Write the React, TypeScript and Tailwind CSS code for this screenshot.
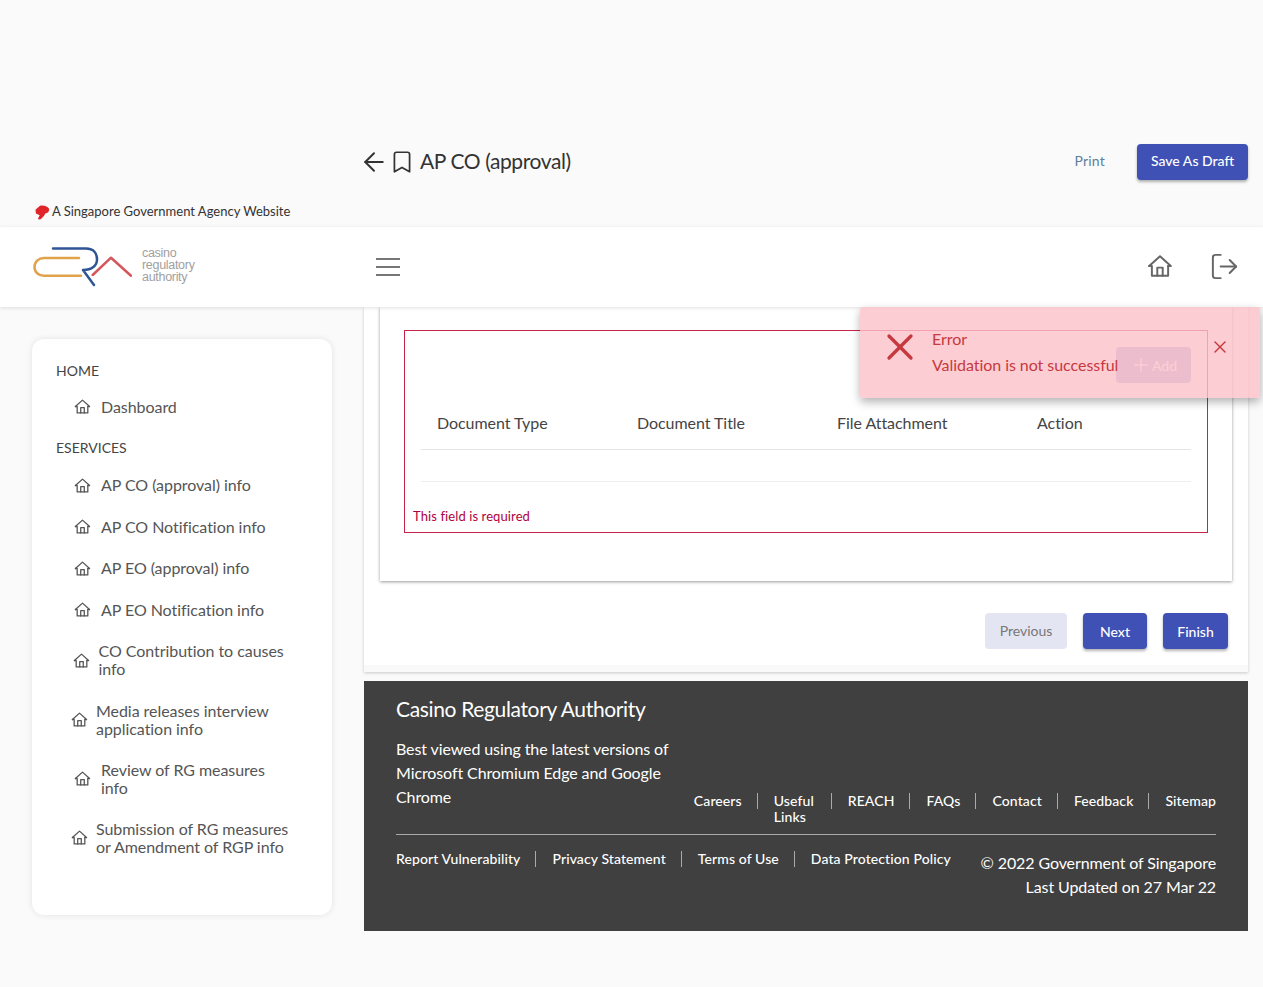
// App.tsx
import { ArrowLeft, Bookmark, LogOut, Plus, X } from "lucide-react";

const font = { fontFamily: "Lato, 'Noto Sans', sans-serif" };

function HomeIcon({ className }: { className?: string }) {
  return (
    <svg viewBox="0 0 24 24" fill="none" stroke="currentColor" strokeWidth="1.8" strokeLinecap="round" strokeLinejoin="round" className={className}>
      <path d="M2 12 12 3l10 9h-2.5" />
      <path d="M2 12h2.5v9h15v-9" />
      <path d="M9.5 21v-7.5h5V21" />
    </svg>
  );
}

function CraLogo() {
  return (
    <svg viewBox="0 0 100 40" fill="none" strokeWidth="2.5" strokeLinecap="round" strokeLinejoin="round" className="h-[40px] w-[100px]">
      <path d="M47 11H12C6.500 11 2.500 15 2.500 20S6.500 28.800 12 28.800h37" stroke="#e0a24a" />
      <path d="M21 1.500h33c8 0 11 5 11 11s-5 10.500-14 10.500l11 15" stroke="#2f5597" />
      <path d="M60.700 28 79 10.700 99 28.700" stroke="#d5575d" />
    </svg>
  );
}

function NavItem({ label, pad, gap }: { label: string[]; pad: string; gap: string }) {
  return (
    <div className={`flex items-center text-[16px] leading-[18px] tracking-[-0.05px] text-[#555] ${label.length > 1 ? "py-[11.6px]" : "py-[11.8px]"} ${pad} ${gap}`}>
      <HomeIcon className="h-[17px] w-[17px] shrink-0" />
      <span>
        {label.map((l) => (
          <span key={l} className="block whitespace-nowrap">{l}</span>
        ))}
      </span>
    </div>
  );
}

function Sidebar() {
  return (
    <aside className="ml-[32px] mt-[32px] h-[576px] w-[300px] shrink-0 rounded-[12px] bg-white pt-[23px] shadow-[0_0_6px_rgba(0,0,0,0.1)]">
      <div className="pl-[24px] text-[14px] leading-[18px] text-[#444]">HOME</div>
      <div className="mt-[6px]">
        <NavItem label={["Dashboard"]} pad="pl-[42px]" gap="gap-[10px]" />
      </div>
      <div className="mt-[8px] pl-[24px] pt-[3px] text-[14px] leading-[18px] text-[#444]">ESERVICES</div>
      <div className="mt-[7.8px]">
        <NavItem label={["AP CO (approval) info"]} pad="pl-[42px]" gap="gap-[10px]" />
        <NavItem label={["AP CO Notification info"]} pad="pl-[42px]" gap="gap-[10px]" />
        <NavItem label={["AP EO (approval) info"]} pad="pl-[42px]" gap="gap-[10px]" />
        <NavItem label={["AP EO Notification info"]} pad="pl-[42px]" gap="gap-[10px]" />
        <NavItem label={["CO Contribution to causes", "info"]} pad="pl-[41px]" gap="gap-[8.500px]" />
        <NavItem label={["Media releases interview", "application info"]} pad="pl-[39px]" gap="gap-[8px]" />
        <NavItem label={["Review of RG measures", "info"]} pad="pl-[42px]" gap="gap-[10px]" />
        <NavItem label={["Submission of RG measures", "or Amendment of RGP info"]} pad="pl-[39px]" gap="gap-[8px]" />
      </div>
    </aside>
  );
}

function Toast() {
  return (
    <div className="absolute left-[860px] top-[307px] z-20 flex h-[91px] w-[400px] rounded-[3px] bg-[#fdc0c9]/80 text-[#c5393f] shadow-[0_4px_10px_rgba(0,0,0,0.3)]">
      <X className="ml-[18px] mt-[18px] h-[44px] w-[44px] shrink-0" strokeWidth={1.8} />
      <div className="ml-[10px] mt-[19px] text-[16px] leading-[26px] tracking-[-0.05px]">
        <div>Error</div>
        <div className="whitespace-nowrap">Validation is not successful</div>
      </div>
      <X className="absolute left-[350px] top-[30px] h-[20px] w-[20px]" strokeWidth={1.7} />
    </div>
  );
}

function TopLinks({ items }: { items: string[] }) {
  return (
    <div className="flex text-[14px] font-medium leading-[16px] tracking-[0.1px] text-white">
      {items.map((l, i) => (
        <div key={l} className={`${i > 0 ? "pl-[16px]" : ""} ${i < items.length - 1 ? "pr-[16px]" : ""} relative`}>
          {l === "Useful Links" ? <span className="block w-[42px]">{l}</span> : <span className="whitespace-nowrap">{l}</span>}
          {i < items.length - 1 && <span className="absolute right-0 top-0 h-[16px] w-px bg-[#aaa]" />}
        </div>
      ))}
    </div>
  );
}

function Footer() {
  return (
    <footer className="mt-[9px] h-[250px] bg-[#404040] px-[32px] pt-[15px] text-white">
      <div className="text-[21px] leading-[26px] tracking-[-0.35px]">Casino Regulatory Authority</div>
      <div className="mt-[15px] flex items-start justify-between border-b border-[#aaa] pb-[9px]">
        <p className="w-[285px] text-[16px] leading-[24px] tracking-[-0.1px]">
          Best viewed using the latest versions of Microsoft Chromium Edge and Google Chrome
        </p>
        <div className="pt-[56px]">
          <TopLinks items={["Careers", "Useful Links", "REACH", "FAQs", "Contact", "Feedback", "Sitemap"]} />
        </div>
      </div>
      <div className="mt-[8px] flex items-start justify-between">
        <div className="pt-[8px]">
          <TopLinks items={["Report Vulnerability", "Privacy Statement", "Terms of Use", "Data Protection Policy"]} />
        </div>
        <div className="pt-[8px] text-right text-[16px] leading-[24px] tracking-[-0.1px]">
          <div>© 2022 Government of Singapore</div>
          <div>Last Updated on 27 Mar 22</div>
        </div>
      </div>
    </footer>
  );
}

function DocumentsBox() {
  return (
    <div className="mx-[24px] h-[203px] border border-[#c8234a] px-[16px]">
      <div className="flex h-[52px] items-end justify-end">
        <button className="flex h-[36px] w-[75px] items-center justify-center rounded-[4px] bg-[#a9b3dc] text-[14px] text-white">
          <Plus className="h-[22px] w-[22px]" strokeWidth={1.5} /> Add
        </button>
      </div>
      <div className="mt-[14px] flex h-[53px] items-center border-b border-[#e5e5e5] px-[16px] text-[16px] tracking-[-0.05px] text-[#444]">
        <span className="w-[200px] shrink-0">Document Type</span>
        <span className="w-[200px] shrink-0">Document Title</span>
        <span className="w-[200px] shrink-0">File Attachment</span>
        <span className="w-[150px] shrink-0">Action</span>
      </div>
      <div className="h-[32px] border-b border-[#eeeeee]" />
      <div className="ml-[-8px] mt-[26px] text-[13px] leading-[16px] tracking-[0.1px] text-[#b00040]">This field is required</div>
    </div>
  );
}

export default function App() {
  return (
    <div className="relative h-[987px] w-[1263px] overflow-hidden bg-[#fafafa]" style={font}>
      <div className="ml-[364px] flex h-[180px] items-end pr-[15px]">
        <div className="flex h-[36px] w-full items-center">
          <ArrowLeft className="ml-[-5px] h-[30px] w-[30px] text-[#333]" strokeWidth={1.6} />
          <Bookmark className="ml-[-0.5px] h-[26px] w-[26px] text-[#333]" strokeWidth={1.6} />
          <span className="ml-[5.5px] pb-[2px] text-[21px] tracking-[-0.4px] text-[#333]">AP CO (approval)</span>
          <span className="ml-auto pb-[3px] text-[14px] tracking-[0.2px] text-[#5d7f99]">Print</span>
          <button className="ml-[32px] h-[36px] w-[111px] rounded-[4px] bg-[#3f51b5] pb-[3px] text-[14px] font-medium text-white shadow-[0_2px_3px_rgba(0,0,0,0.3)]">
            Save As Draft
          </button>
        </div>
      </div>
      <div className="flex h-[47px] items-center pl-[35px] pt-[17px] text-[13px] text-[#333]">
        <svg viewBox="0 0 16 16" className="mr-[2px] h-[15px] w-[15px]">
          <path d="M5 1C8 0 13 1 15 4c.5 3-2 5-4 5l-1 2c-2 2-3 4-5 4.500L3 15l2-4-4-2-.5-4z" fill="#e0242a" />
        </svg>
        A Singapore Government Agency Website
      </div>
      <header className="relative z-10 flex h-[80px] items-center bg-white pl-[32px] pr-[23px] shadow-[0_1px_4px_rgba(0,0,0,0.12)]">
        <CraLogo />
        <div className="ml-[10px] mt-[-5px] w-[54px] text-[12.5px] leading-[12px] tracking-[-0.3px] text-[#a0a0a0]" style={{ fontFamily: "'Liberation Sans', sans-serif" }}>
          <div>casino</div>
          <div>regulatory</div>
          <div>authority</div>
        </div>
        <div className="ml-[180px] mt-[-1px] flex w-[24px] flex-col gap-[6px]">
          <span className="h-[2px] bg-[#777]" />
          <span className="h-[2px] bg-[#777]" />
          <span className="h-[2px] bg-[#777]" />
        </div>
        <HomeIcon className="ml-auto mt-[-2px] h-[26px] w-[26px] text-[#666]" />
        <LogOut className="ml-[36px] mt-[-1px] h-[31px] w-[31px] text-[#666]" strokeWidth={1.5} />
      </header>
      <div className="flex">
        <Sidebar />
        <main className="ml-[32px] w-[884px]">
          <div className="shadow-[0_1px_3px_rgba(0,0,0,0.2)]">
            <div className="h-[358px] bg-white px-[16px]">
              <div className="h-[274px] pt-[23px] shadow-[0_1px_3px_rgba(0,0,0,0.4)]">
                <DocumentsBox />
              </div>
              <div className="mt-[32px] flex justify-end gap-[16px] pr-[4px] text-[14px] font-medium">
                <button className="h-[36px] w-[82px] rounded-[4px] bg-[#e4e5f3] pb-[1px] font-normal text-[#777]">Previous</button>
                <button className="h-[36px] w-[64px] rounded-[4px] bg-[#3f51b5] text-white shadow-[0_2px_3px_rgba(0,0,0,0.3)]">Next</button>
                <button className="h-[36px] w-[65px] rounded-[4px] bg-[#3f51b5] text-white shadow-[0_2px_3px_rgba(0,0,0,0.3)]">Finish</button>
              </div>
            </div>
            <div className="h-[7px] bg-[#f9f9f9]" />
          </div>
          <Footer />
        </main>
      </div>
      <Toast />
    </div>
  );
}
